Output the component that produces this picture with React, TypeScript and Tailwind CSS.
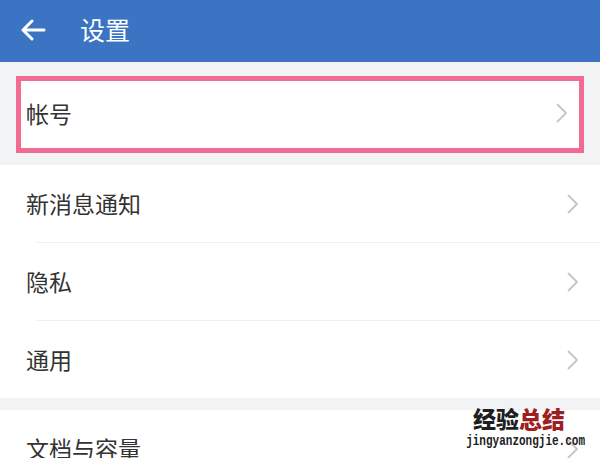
const cjk = { fontFamily: '"Noto Sans CJK SC", "Noto Sans", sans-serif' };

function Chevron() {
  return (
    <svg width="12" height="20" viewBox="0 0 12 20" fill="none">
      <path d="M1.5 1.5L10 10l-8.5 8.5" stroke="#c6c6c6" strokeWidth="1.8" strokeLinecap="round" strokeLinejoin="round" />
    </svg>
  );
}

function Row({ label, divider }: { label: string; divider?: boolean }) {
  return (
    <div className="bg-white">
      <div className="flex h-[77px] items-center justify-between pl-[26px] pr-[21px]">
        <span className="text-[23px] text-[#333333]">{label}</span>
        <Chevron />
      </div>
      {divider && <div className="ml-[36px] h-px bg-[#f0f0f0]" />}
    </div>
  );
}

export default function App() {
  return (
    <div className="relative h-[458px] w-[600px] overflow-hidden bg-[#f2f3f5]" style={cjk}>
      {/* header */}
      <div className="flex h-[62px] items-center bg-[#3a74c3] pb-[3px] pl-[20px]">
        <svg width="26" height="22" viewBox="0 0 26 22" fill="none">
          <path
            d="M24 11H3M12 2L3 11l9 9"
            stroke="white"
            strokeWidth="3"
            strokeLinecap="round"
            strokeLinejoin="round"
          />
        </svg>
        <span className="ml-[34px] text-[25px] text-white">设置</span>
      </div>

      <div className="pt-[14px]">
        <div className="mx-[16px] border-[5px] border-[#f26b93] bg-white">
          <div className="flex h-[67px] items-center justify-between pb-[3px] pl-[5px] pr-[11px]">
            <span className="text-[23px] text-[#333333]">帐号</span>
            <Chevron />
          </div>
        </div>
      </div>

      <div className="mt-[12px]">
        <Row label="新消息通知" divider />
        <Row label="隐私" divider />
        <Row label="通用" />
      </div>

      <div className="mt-[12px]">
        <Row label="文档与容量" />
      </div>

      {/* watermark */}
      <div className="absolute right-[15px] top-[407px] flex flex-col items-end leading-none">
        <div className="mr-[20px] text-[23px] font-black">
          <span className="text-[#1f1f1f]">经验</span>
          <span className="text-[#9e1f22]">总结</span>
        </div>
        <div
          className="mt-[6px] scale-y-[1.3] text-[11px] font-bold text-[#222222]"
          style={{ fontFamily: '"Liberation Mono", monospace' }}
        >
          jingyanzongjie.com
        </div>
      </div>
    </div>
  );
}
